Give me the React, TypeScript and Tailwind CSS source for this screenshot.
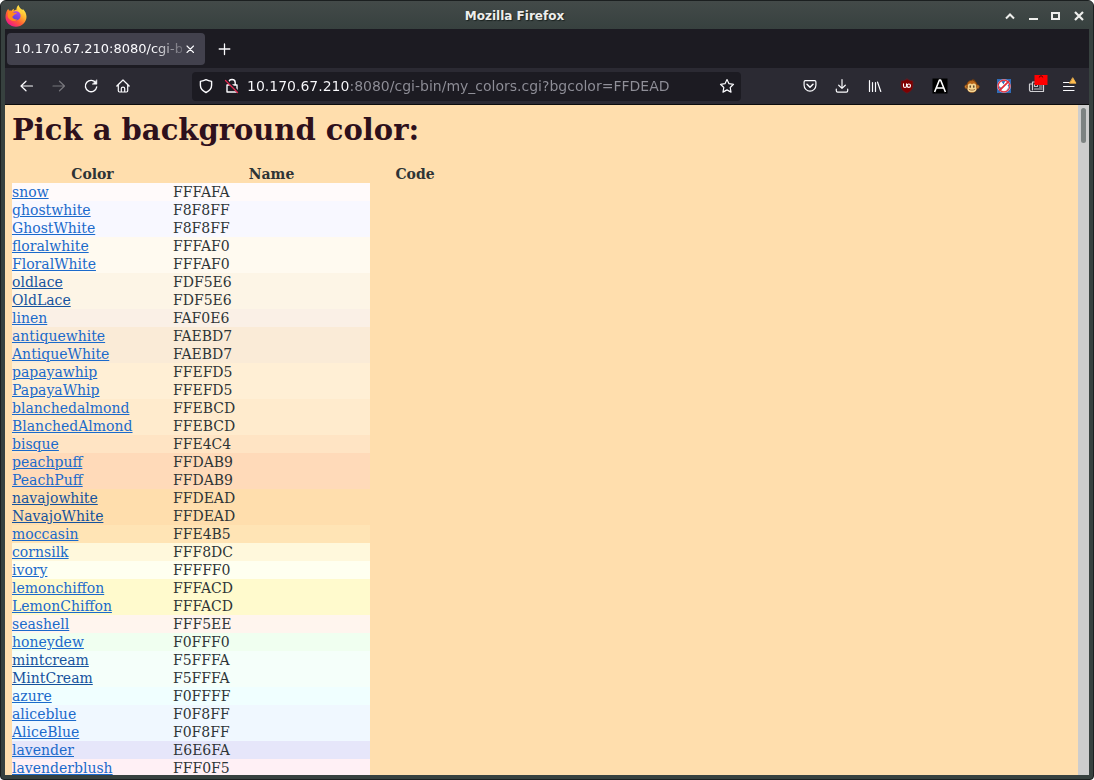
import React from "react";

type ColorRow = { name: string; code: string; visited?: boolean };

const COLORS: ColorRow[] = [
  { name: "snow", code: "FFFAFA" },
  { name: "ghostwhite", code: "F8F8FF" },
  { name: "GhostWhite", code: "F8F8FF" },
  { name: "floralwhite", code: "FFFAF0" },
  { name: "FloralWhite", code: "FFFAF0" },
  { name: "oldlace", code: "FDF5E6", visited: true },
  { name: "OldLace", code: "FDF5E6", visited: true },
  { name: "linen", code: "FAF0E6" },
  { name: "antiquewhite", code: "FAEBD7" },
  { name: "AntiqueWhite", code: "FAEBD7" },
  { name: "papayawhip", code: "FFEFD5" },
  { name: "PapayaWhip", code: "FFEFD5" },
  { name: "blanchedalmond", code: "FFEBCD" },
  { name: "BlanchedAlmond", code: "FFEBCD" },
  { name: "bisque", code: "FFE4C4" },
  { name: "peachpuff", code: "FFDAB9" },
  { name: "PeachPuff", code: "FFDAB9" },
  { name: "navajowhite", code: "FFDEAD", visited: true },
  { name: "NavajoWhite", code: "FFDEAD", visited: true },
  { name: "moccasin", code: "FFE4B5" },
  { name: "cornsilk", code: "FFF8DC" },
  { name: "ivory", code: "FFFFF0" },
  { name: "lemonchiffon", code: "FFFACD" },
  { name: "LemonChiffon", code: "FFFACD" },
  { name: "seashell", code: "FFF5EE" },
  { name: "honeydew", code: "F0FFF0" },
  { name: "mintcream", code: "F5FFFA", visited: true },
  { name: "MintCream", code: "F5FFFA", visited: true },
  { name: "azure", code: "F0FFFF" },
  { name: "aliceblue", code: "F0F8FF" },
  { name: "AliceBlue", code: "F0F8FF" },
  { name: "lavender", code: "E6E6FA" },
  { name: "lavenderblush", code: "FFF0F5" },
];

function Icon({ children }: { children: React.ReactNode }) {
  return (
    <svg
      className="size-4 shrink-0 overflow-visible"
      viewBox="0 0 16 16"
      fill="none"
      stroke="currentColor"
      strokeWidth="1.2"
      strokeLinecap="round"
      strokeLinejoin="round"
      aria-hidden="true"
    >
      {children}
    </svg>
  );
}

function IconButton({ label, disabled, children }: { label: string; disabled?: boolean; children: React.ReactNode }) {
  return (
    <button
      type="button"
      aria-label={label}
      disabled={disabled}
      className="flex size-8 shrink-0 items-center justify-center rounded text-[#fbfbfe] disabled:text-[#77767c]"
    >
      <Icon>{children}</Icon>
    </button>
  );
}

function FirefoxLogo() {
  return (
    <svg className="size-[22px] shrink-0" viewBox="0 0 22 22" aria-hidden="true">
      <defs>
        <linearGradient id="fx-body" x1="0.85" y1="0.1" x2="0.2" y2="0.95">
          <stop offset="0" stopColor="#fff44f" />
          <stop offset="0.35" stopColor="#ffb02e" />
          <stop offset="0.65" stopColor="#ff5a36" />
          <stop offset="1" stopColor="#f0148c" />
        </linearGradient>
        <linearGradient id="fx-globe" x1="0.7" y1="0" x2="0.3" y2="1">
          <stop offset="0" stopColor="#b341f0" />
          <stop offset="1" stopColor="#4a48d8" />
        </linearGradient>
      </defs>
      <path
        d="M13.6 0c.3 1.9 1.4 2.800 2.800 4.200.4-.1.7.1 1.200.7.2-.4.3-.7.3-1 2.200 2 3.600 4.900 3.600 7.900 0 5.500-4.700 9.900-10.500 9.900S.5 17.200.5 11.900c0-3 .8-5.800 2.800-8.200.2.9.4 1.400.8 1.800.8-.2 1.800-.1 2.600.3.5-1 1.500-1.700 2.600-2-.5.9-.7 1.500-.4 2.100.7-.9 1.500-1.100 2.600-1.100-.1-1.900.5-3.500 2.100-4.800Z"
        fill="url(#fx-body)"
      />
      <circle cx="11" cy="10.800" r="4.600" fill="url(#fx-globe)" />
      <path
        d="M3 6.800c2-.9 4.200-.5 5.600 1h3.300c-.3 1-1.300 1.400-2.500 1.800-.3 1.200-1.800 1.500-2.100 2.500.8 1.700 3.100 2.800 5.100 2.100-.8 1.300-2.500 2.100-4.400 1.700-3-.6-5.200-2.800-5.400-5.200Z"
        fill="#ff8a1c"
      />
      <path d="M12.500 4.500c2.900.5 5 3 4.900 6.300-.4-1.800-1.400-3-2.900-3.600Z" fill="#ffd43a" />
    </svg>
  );
}

function TitleBar() {
  const control = "flex size-4 items-center justify-center text-[#eeeeec]";
  return (
    <header className="flex h-7 shrink-0 items-center bg-linear-to-b from-[#434a49] to-[#37413f] pl-1 pr-1.5 pt-px font-['DejaVu_Sans',sans-serif]">
      <FirefoxLogo />
      <div className="flex-1 text-center text-[12px] font-bold leading-4 text-[#eeeeec] [text-shadow:1px_1px_1px_#1a2220]">
        Mozilla Firefox
      </div>
      <div className="flex gap-[7px]">
        <button type="button" aria-label="Roll up" className={control}>
          <svg className="size-4" viewBox="0 0 16 16" fill="none" stroke="currentColor" strokeWidth="2"><path d="m4 10.500 4-4 4 4" /></svg>
        </button>
        <button type="button" aria-label="Minimize" className={control}>
          <svg className="size-4" viewBox="0 0 16 16" fill="currentColor"><path d="M4 10h9v2H4z" /></svg>
        </button>
        <button type="button" aria-label="Maximize" className={control}>
          <svg className="size-4" viewBox="0 0 16 16" fill="none" stroke="currentColor" strokeWidth="2"><path d="M4 5h7v6H4z" /></svg>
        </button>
        <button type="button" aria-label="Close window" className={control}>
          <svg className="size-4" viewBox="0 0 16 16" fill="none" stroke="currentColor" strokeWidth="2.200"><path d="m4 4 8 8m0-8-8 8" /></svg>
        </button>
      </div>
    </header>
  );
}

function TabStrip() {
  return (
    <div className="flex h-[39px] shrink-0 items-center bg-[#1c1b22] pl-0.5">
      <div className="flex h-8 w-[198px] items-center rounded bg-[#42414d] px-[7px]">
        <a
          href="#top"
          className="min-w-0 flex-1 overflow-hidden whitespace-nowrap text-[13px] leading-5 text-[#fbfbfe] [mask-image:linear-gradient(to_right,black_138px,transparent_176px)]"
        >
          10.170.67.210:8080/cgi-bin/my_colors.cgi
        </a>
        <button type="button" aria-label="Close tab" className="flex w-4 shrink-0 justify-center text-[#fbfbfe]">
          <svg className="size-4" viewBox="0 0 16 16" fill="none" stroke="currentColor" strokeWidth="1.100" strokeLinecap="round"><path d="m5 5 6.500 6.500m0-6.500L5 11.500" /></svg>
        </button>
      </div>
      <button type="button" aria-label="New tab" className="ml-[11px] text-[#fbfbfe]">
        <svg className="size-4" viewBox="0 0 16 16" fill="none" stroke="currentColor" strokeWidth="1.300" strokeLinecap="round"><path d="M8.500 3v10.500M3.200 8h10.600" /></svg>
      </button>
    </div>
  );
}

function Extensions() {
  return (
    <div className="flex w-[291px] shrink-0 items-center justify-between">
      <IconButton label="Save to Pocket">
        <path d="M3.300 2.700h9.400c.7 0 1.200.5 1.200 1.200v3.300a5.900 5.900 0 0 1-11.800 0V3.900c0-.7.5-1.200 1.200-1.200Z" />
        <path d="m5 6.300 3 2.900 3-2.900" strokeWidth="1.500" />
      </IconButton>
      <IconButton label="Downloads">
        <path d="M8 1.500v8.700M4.700 7.200 8 10.400l3.300-3.200M2.300 11v1.700c0 .8.500 1.400 1.400 1.400h8.600c.9 0 1.400-.6 1.400-1.400V11" />
      </IconButton>
      <IconButton label="Library">
        <path d="M2.500 2.500v11M5.500 4.500v9M8.500 4.500v9" />
        <path d="m10.500 4 3.300 9.500" />
      </IconButton>
      <IconButton label="uBlock Origin">
        <path d="M8 .9c2 1.300 4 1.900 6 2v5c0 3.600-2.700 5.800-6 7.300-3.300-1.500-6-3.700-6-7.300v-5c2-.1 4-.7 6-2Z" fill="#800000" stroke="#56202a" strokeWidth=".8" />
        <path d="M4.500 5.900v2c0 2.100 3 2.100 3 0v-2" stroke="#fff" strokeWidth="1.100" />
        <circle cx="9.800" cy="7.700" r="1.700" stroke="#fff" strokeWidth="1.100" />
      </IconButton>
      <IconButton label="Font style">
        <path d="M.5.500h15v15H.5z" fill="#000" stroke="none" />
        <path d="M2.600 14 7.400 2h1.200l4.800 12M4.600 10h6.800" stroke="#fff" strokeWidth="1.600" strokeLinecap="butt" />
      </IconButton>
      <IconButton label="Greasemonkey">
        <circle cx="2.700" cy="8.700" r="2" fill="#d98a36" stroke="#784014" strokeWidth=".7" />
        <circle cx="13.300" cy="8.700" r="2" fill="#d98a36" stroke="#784014" strokeWidth=".7" />
        <path d="M3 9C2.400 5.300 4.200 2.500 8 2.300l1.300-1-.2 1.200 2-.4-.9.900c2.100.7 3.200 3 2.800 6-.2 3.300-2.100 5.600-5 5.600S3.200 12.300 3 9Z" fill="#b96519" stroke="#713908" strokeWidth=".7" />
        <path d="M3.900 9c-.8-2.900 2-4.300 4.100-2.800 2.100-1.500 4.900-.1 4.100 2.800 1.600 3.300-1 5.300-4.100 5.300S2.300 12.300 3.900 9Z" fill="#f5d492" stroke="none" />
        <path d="M6.200 7.800v1.400M9.800 7.800v1.400" stroke="#3f2a1a" strokeWidth="1.200" />
        <path d="M5.300 11.500c1.500 1 3.900 1 5.400 0" stroke="#8f5f32" strokeWidth=".8" />
      </IconButton>
      <IconButton label="Content blocker">
        <path d="M1 1h14v14H1z" fill="#2f6cb8" stroke="none" />
        <path d="M3.500 4.500c1-1.500 2.600-.8 3 .6l1.300 1.300C8.500 3 11 1.500 12.800 3.500c1 1.500.2 3-1.300 3.800 1.500 1 1.400 3-.3 3.700-1 2.500-3.500 3.300-5.200 2-1-1-.8-2.200-.3-3.200C3.200 9.500 2 6.500 3.500 4.500Z" fill="#fff" stroke="none" />
        <circle cx="8" cy="8" r="5.900" stroke="#f6b9be" strokeWidth="1.800" />
        <circle cx="8" cy="8" r="5.900" stroke="#e0303c" strokeWidth="1.100" />
        <path d="m12.200 3.800-8.400 8.400" stroke="#e0303c" strokeWidth="1.800" />
      </IconButton>
      <IconButton label="News reader">
        <path d="M3.500 4h11v9.500h-12c-1.300 0-2-.6-2-1.800V6h3Zm0 2v5.800" stroke="#d0d0d4" />
        <path d="M5.500 6.500h3v2h-3zM10.500 7h2.500M10.500 9h2.500M5.500 11h7.500" stroke="#c0c0c6" strokeWidth="1.100" />
        <path d="M5.500-3h13v10h-13z" fill="#f00" stroke="none" />
        <path d="m10.200-.9 1.800-1.500 1.800 1.500" stroke="#360000" strokeWidth=".9" />
      </IconButton>
      <IconButton label="Application menu">
        <path d="M2.500 4.500h5.600M2.500 8.500h10.500M2.500 12.500h10.500" />
        <path d="M11.900 0 15 5.200H8.800Z" fill="#ffbd4f" stroke="#ffbd4f" strokeWidth=".8" />
      </IconButton>
    </div>
  );
}

function NavBar() {
  return (
    <nav className="flex h-9 shrink-0 items-center bg-[#2b2a33] pl-1.5 pr-1">
      <div className="flex items-center">
        <IconButton label="Back"><path d="M13.500 8H2M7 3.200 2 8l5 4.800" /></IconButton>
        <IconButton label="Forward" disabled><path d="M2 8h11.500M8.500 3.200l5 4.800-5 4.800" /></IconButton>
        <IconButton label="Reload">
          <path d="M12.900 5A5.700 5.700 0 1 0 13.700 9" strokeWidth="1.400" />
          <path d="M13.900 2v4.200H9.500Z" fill="currentColor" strokeWidth=".5" />
        </IconButton>
        <IconButton label="Home">
          <path d="M1.800 8 8 2l6.200 6M3.300 7v5.800c0 .8.400 1.200 1.200 1.200h7c.8 0 1.200-.4 1.200-1.200V7" />
          <path d="M6.300 13.500v-3c0-1.900 3.400-1.900 3.400 0v3" />
        </IconButton>
      </div>
      <div className="mx-[53px] flex h-[29px] min-w-0 flex-1 items-center rounded bg-[#1c1b22] px-1.5 text-[#fbfbfe]">
        <button type="button" aria-label="Tracking protection" className="size-4">
          <Icon><path d="M8 1.600c2 1.100 3.800 1.500 5.600 1.800v3.800c0 3.200-2 5.500-5.600 7.300-3.600-1.800-5.600-4.100-5.600-7.300V3.400C4.200 3.100 6 2.700 8 1.600Z" strokeWidth="1.400" /></Icon>
        </button>
        <button type="button" aria-label="Connection is not secure" className="ml-2.5 size-4">
          <Icon>
            <path d="M3 7h10v7H3zM4.800 7V4.500c0-4 6.400-4 6.400 0V7" strokeWidth="1.400" />
            <path d="m2.500 2.300 12 12" stroke="#1c1b22" strokeWidth="2.600" />
            <path d="m1.500 2.500 12 12" stroke="#e22850" strokeWidth="1.300" />
          </Icon>
        </button>
        <input
          type="text"
          aria-label="Address"
          defaultValue="10.170.67.210:8080/cgi-bin/my_colors.cgi?bgcolor=FFDEAD"
          className="ml-[7px] h-6 min-w-0 flex-1 bg-linear-to-r from-[#fbfbfe] from-[102px] to-[#8f8f98] to-[102px] bg-clip-text text-[14px] text-transparent caret-white outline-none"
        />
        <button type="button" aria-label="Bookmark this page" className="size-4">
          <Icon><path d="m8 1.500 2 4.200 4.500.6-3.300 3.200.8 4.600L8 11.900l-4 2.200.8-4.600-3.300-3.200 4.500-.6Z" /></Icon>
        </button>
      </div>
      <Extensions />
    </nav>
  );
}

function ColorPage() {
  return (
    <main id="top" className="flex min-h-0 flex-1 border-t border-[#0c0c0d] bg-[#ffdead] font-['DejaVu_Serif',serif] text-[#2e3436]">
      <div className="min-w-0 flex-1 overflow-hidden pl-[7px] pt-2">
        <h1 className="text-[29px] font-bold leading-[34px] text-[#2e101c]">Pick a background color:</h1>
        <table className="mt-[18px] w-[448px] table-fixed border-collapse text-[14px] leading-[18px]">
          <colgroup>
            <col className="w-[161px]" />
            <col className="w-[197px]" />
            <col className="w-[90px]" />
          </colgroup>
          <thead>
            <tr>
              <th className="p-0">Color</th>
              <th className="p-0">Name</th>
              <th className="p-0">Code</th>
            </tr>
          </thead>
          <tbody>
            {COLORS.map((c) => (
              <tr key={c.name} className="h-[18px]">
                <td className="p-0" style={{ backgroundColor: "#" + c.code }}>
                  <a
                    href={"#bgcolor=" + c.code}
                    className={c.visited ? "text-[#15539e] underline" : "text-[#1b6acb] underline"}
                  >
                    {c.name}
                  </a>
                </td>
                <td className="p-0" style={{ backgroundColor: "#" + c.code }}>{c.code}</td>
              </tr>
            ))}
          </tbody>
        </table>
      </div>
      <div className="w-[11px] shrink-0 bg-[#cdcdcd] px-[3px] pt-[3px]">
        <div className="h-[35px] rounded-full bg-[#7d8382]" />
      </div>
    </main>
  );
}

export default function App() {
  return (
    <div className="h-screen bg-white">
      <div className="flex h-full flex-col overflow-hidden rounded-t-md rounded-b-sm border border-[#1b1f20] bg-[#37413f]">
        <TitleBar />
        <div className="mx-1 mb-1 flex min-h-0 flex-1 flex-col font-['DejaVu_Sans',sans-serif]">
          <TabStrip />
          <NavBar />
          <ColorPage />
        </div>
      </div>
    </div>
  );
}
